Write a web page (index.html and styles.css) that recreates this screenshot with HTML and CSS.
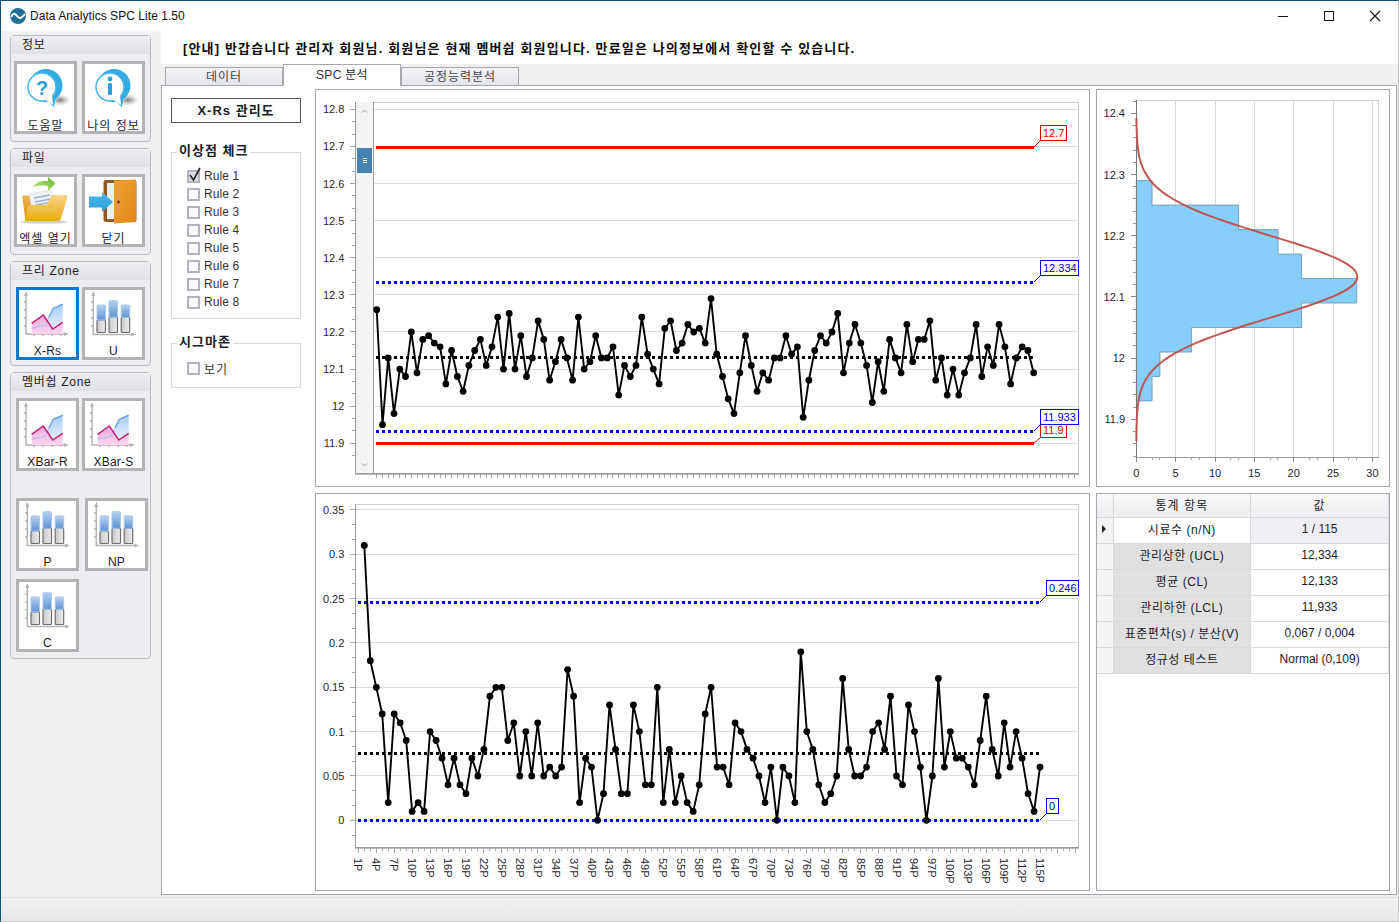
FILE: index.html
```html
<!DOCTYPE html>
<html lang="ko">
<head>
<meta charset="utf-8">
<title>Data Analytics SPC Lite 1.50</title>
<link rel="stylesheet" href="styles.css">
</head>
<body>
<svg class="defs" width="0" height="0" aria-hidden="true">
  <defs>
    <linearGradient id="gFolder" x1="0" y1="0" x2="0" y2="1"><stop offset="0" stop-color="#fbd58a"/><stop offset="1" stop-color="#e8ab12"/></linearGradient>
    <linearGradient id="gBack" x1="0" y1="0" x2="0" y2="1"><stop offset="0" stop-color="#f2b24a"/><stop offset="1" stop-color="#d98f1c"/></linearGradient>
    <linearGradient id="gArrow" x1="0" y1="1" x2="1" y2="0"><stop offset="0" stop-color="#d2ec96"/><stop offset="1" stop-color="#5cb424"/></linearGradient>
    <linearGradient id="gDoor" x1="0" y1="0" x2="1" y2="1"><stop offset="0" stop-color="#f0a32c"/><stop offset="1" stop-color="#e0861a"/></linearGradient>
    <linearGradient id="gBlueArrow" x1="0" y1="0" x2="0" y2="1"><stop offset="0" stop-color="#4cb8ea"/><stop offset="1" stop-color="#2f9fdc"/></linearGradient>
    <linearGradient id="gPink" x1="0" y1="0" x2="0" y2="1"><stop offset="0" stop-color="#f7a8dc"/><stop offset="1" stop-color="#fcd6ee"/></linearGradient>
    <linearGradient id="gSky" x1="0" y1="0" x2="0" y2="1"><stop offset="0" stop-color="#a9cdf7"/><stop offset="1" stop-color="#e6f0fc"/></linearGradient>
    <linearGradient id="gBarB" x1="0" y1="0" x2="0" y2="1"><stop offset="0" stop-color="#b5d2f2"/><stop offset="1" stop-color="#5f93d2"/></linearGradient>
    <linearGradient id="gBarG" x1="0" y1="0" x2="1" y2="0"><stop offset="0" stop-color="#c8c8c8"/><stop offset="1" stop-color="#ededed"/></linearGradient>
    <radialGradient id="gShade"><stop offset="0" stop-color="#777"/><stop offset="1" stop-color="#bbb" stop-opacity="0"/></radialGradient>
    <symbol id="i-bubble" viewBox="0 0 57 52">
      <ellipse cx="43" cy="36" rx="11" ry="6" fill="url(#gShade)"/>
      <circle cx="29" cy="21.5" r="16.5" fill="#33ace6"/>
      <path d="M27 34 L37 43 L39 30 Z" fill="#33ace6"/>
      <circle cx="25" cy="23" r="14" fill="#fff" stroke="#4ab6ea" stroke-width="1.5"/>
      <path d="M27 35 L36 41 L35 30 Z" fill="#fff"/>
    </symbol>
    <symbol id="i-chart" viewBox="0 0 57 52">
      <path d="M7 3V44H48" fill="none" stroke="#b4b4b4" stroke-width="1.5"/>
      <path d="M7 1L5 6H9ZM50 44L45 42V46Z" fill="#b4b4b4"/>
      <path d="M5 12H7M5 20H7M5 28H7M5 36H7M15 44V46M24 44V46M33 44V46M42 44V46" stroke="#999" stroke-width="1"/>
      <path d="M12.7 33.3L24.3 25L33.7 39L43.7 32.3V44H12.7Z" fill="url(#gPink)"/>
      <path d="M12.7 38.3L26 35L34.3 18.3L43.7 14.3V32.3L33.7 39L29 32Z" fill="url(#gSky)"/>
      <path d="M12.7 38.3L26 35L30 27" fill="none" stroke="#c4bdf4" stroke-width="1.5"/>
      <path d="M30 27L34.3 18.3L43.7 14.3" fill="none" stroke="#6ba3ee" stroke-width="1.5"/>
      <path d="M12.7 33.3L24.3 25L33.7 39L43.7 32.3" fill="none" stroke="#c41f72" stroke-width="1.5"/>
    </symbol>
    <symbol id="i-bars" viewBox="0 0 57 52">
      <path d="M8.3 3V44.5H49" fill="none" stroke="#b4b4b4" stroke-width="1.5"/>
      <path d="M8.3 1L6.3 6H10.3ZM51 44.5L46 42.5V46.5Z" fill="#b4b4b4"/>
      <path d="M6 12H8M6 20H8M6 28H8M6 36H8" stroke="#999"/>
      <rect x="12" y="30" width="8.5" height="12.5" rx="1" fill="url(#gBarG)" stroke="#6d6d6d" stroke-width="1.2"/>
      <rect x="12" y="15" width="8.5" height="15" rx="1" fill="url(#gBarB)" stroke="#a8c8f0" stroke-width="1"/>
      <rect x="24" y="27.3" width="8.5" height="15.2" rx="1" fill="url(#gBarG)" stroke="#6d6d6d" stroke-width="1.2"/>
      <rect x="24" y="10.7" width="8.5" height="16.6" rx="1" fill="url(#gBarB)" stroke="#a8c8f0" stroke-width="1"/>
      <rect x="36.2" y="27.3" width="8.5" height="15.2" rx="1" fill="url(#gBarG)" stroke="#6d6d6d" stroke-width="1.2"/>
      <rect x="36.2" y="15" width="8.5" height="12.3" rx="1" fill="url(#gBarB)" stroke="#a8c8f0" stroke-width="1"/>
    </symbol>
  </defs>
</svg>

<div class="window">
  <header class="titlebar">
    <svg class="appicon" width="18" height="18" viewBox="0 0 18 18"><circle cx="9" cy="9" r="8" fill="#1f6f96"/><path d="M2 10C4 6 6 6 8 9S12 12 16 7" fill="none" stroke="#fff" stroke-width="2"/></svg>
    <span class="apptitle">Data Analytics SPC Lite 1.50</span>
    <div class="winctrls">
      <span class="winbtn"><svg width="12" height="12" viewBox="0 0 12 12"><path d="M1 6.5H11" stroke="#111"/></svg></span>
      <span class="winbtn"><svg width="12" height="12" viewBox="0 0 12 12"><rect x="1.5" y="1.5" width="9" height="9" fill="none" stroke="#111"/></svg></span>
      <span class="winbtn"><svg width="12" height="12" viewBox="0 0 12 12"><path d="M1 1L11 11M11 1L1 11" stroke="#111" stroke-width="1.1"/></svg></span>
    </div>
  </header>

  <div class="appbody">
    <aside class="sidebar">
      <section class="group">
        <h2 class="group-head">정보</h2>
        <div class="group-body tight">
          <button class="tool"><svg class="tool-icon"><use href="#i-bubble"/><text class="bubble-mark" x="25" y="31">?</text></svg><span class="ko">도움말</span></button>
          <button class="tool"><svg class="tool-icon"><use href="#i-bubble"/><circle cx="25" cy="15" r="2.4" fill="#2f9fdc"/><rect x="23" y="19" width="4" height="12" rx="1" fill="#2f9fdc"/></svg><span class="ko">나의 정보</span></button>
        </div>
      </section>
      <section class="group">
        <h2 class="group-head">파일</h2>
        <div class="group-body tight">
          <button class="tool"><svg class="tool-icon" viewBox="0 0 57 52">
            <ellipse cx="27" cy="45" rx="24" ry="1.6" fill="#d0d0d0"/>
            <path d="M5.3 19.7Q5 18.5 7 18.5H12L14 20V40L8.5 44Z" fill="url(#gBack)"/>
            <path d="M12 17L34 13L38 30L15 34Z" fill="#eef2f6" stroke="#cfd6dc" stroke-width=".6"/>
            <path d="M17 21L33 18M18 25L34 22M19 28L35 25" stroke="#9cb4cc" stroke-width="1.6"/>
            <path d="M11.3 28H29.7L34.7 18H49Q51 18 50.5 20L43.5 43Q43 44 42 44H8Z" fill="url(#gFolder)"/>
            <path d="M15.7 11C18 5 24 3.4 31 4V0L38.5 6.5L31 14V9C25 8 20 8.500 15.7 11Z" fill="url(#gArrow)"/>
          </svg><span class="ko">엑셀 열기</span></button>
          <button class="tool"><svg class="tool-icon" viewBox="0 0 57 52">
            <rect x="18.5" y="3" width="33" height="42" rx="2.5" fill="#8f5a22"/>
            <rect x="22" y="6" width="8" height="36" fill="#eeeeee"/>
            <path d="M29 3.5L51 2.500V45L29 46.5Z" fill="url(#gDoor)"/>
            <circle cx="33.5" cy="25" r="1.4" fill="#6a3c10"/>
            <path d="M4 19.5H17V15L28 25L17 35V30.5H4Z" fill="url(#gBlueArrow)"/>
          </svg><span class="ko">닫기</span></button>
        </div>
      </section>
      <section class="group">
        <h2 class="group-head">프리 Zone</h2>
        <div class="group-body wide short">
          <button class="tool selected"><svg class="tool-icon"><use href="#i-chart"/></svg><span>X-Rs</span></button>
          <button class="tool"><svg class="tool-icon"><use href="#i-bars"/></svg><span>U</span></button>
        </div>
      </section>
      <section class="group">
        <h2 class="group-head">멤버쉽 Zone</h2>
        <div class="group-body member">
          <div class="toolrow row-xbar">
            <button class="tool"><svg class="tool-icon"><use href="#i-chart"/></svg><span>XBar-R</span></button>
            <button class="tool"><svg class="tool-icon"><use href="#i-chart"/></svg><span>XBar-S</span></button>
          </div>
          <div class="toolrow row-p">
            <button class="tool"><svg class="tool-icon"><use href="#i-bars"/></svg><span>P</span></button>
            <button class="tool"><svg class="tool-icon"><use href="#i-bars"/></svg><span>NP</span></button>
          </div>
          <div class="toolrow row-c">
            <button class="tool"><svg class="tool-icon"><use href="#i-bars"/></svg><span>C</span></button>
          </div>
        </div>
      </section>
    </aside>

    <main class="content">
      <p class="notice">[안내] 반갑습니다 관리자 회원님. 회원님은 현재 멤버쉽 회원입니다. 만료일은 나의정보에서 확인할 수 있습니다.</p>
      <nav class="tabs">
        <span class="tab ko">데이터</span>
        <span class="tab active">SPC 분석</span>
        <span class="tab ko">공정능력분석</span>
      </nav>
      <div class="tabpanel">
        <div class="options">
          <div class="chart-title">X-Rs 관리도</div>
          <fieldset class="opts rules">
            <legend>이상점 체크</legend>
            <label class="rule"><span class="check on"><svg class="tick" width="16" height="16" viewBox="0 0 16 16"><path d="M3 8L6.5 13L13 1" fill="none" stroke="#222" stroke-width="1.6"/></svg></span>Rule 1</label>
            <label class="rule"><span class="check"></span>Rule 2</label>
            <label class="rule"><span class="check"></span>Rule 3</label>
            <label class="rule"><span class="check"></span>Rule 4</label>
            <label class="rule"><span class="check"></span>Rule 5</label>
            <label class="rule"><span class="check"></span>Rule 6</label>
            <label class="rule"><span class="check"></span>Rule 7</label>
            <label class="rule"><span class="check"></span>Rule 8</label>
          </fieldset>
          <fieldset class="opts sigma">
            <legend>시그마존</legend>
            <label class="rule"><span class="check"></span><span class="ko">보기</span></label>
          </fieldset>
        </div>
        <div class="panel"><svg id="chartX" class="chart" viewBox="316 90 773 396"></svg></div>
        <div class="panel side"><svg id="chartH" class="chart" viewBox="1097 90 292 396"></svg></div>
        <div class="panel"><svg id="chartR" class="chart" viewBox="316 494 773 396"></svg></div>
        <div class="panel side">
          <table class="stats">
            <thead>
              <tr><th class="rowhead"></th><th>통계 항목</th><th>값</th></tr>
            </thead>
            <tbody>
              <tr class="current"><td class="rowhead"><i class="pointer"></i></td><td class="name">시료수 (n/N)</td><td class="val">1 / 115</td></tr>
              <tr><td class="rowhead"></td><td class="name">관리상한 (UCL)</td><td class="val">12,334</td></tr>
              <tr><td class="rowhead"></td><td class="name">평균 (CL)</td><td class="val">12,133</td></tr>
              <tr><td class="rowhead"></td><td class="name">관리하한 (LCL)</td><td class="val">11,933</td></tr>
              <tr><td class="rowhead"></td><td class="name">표준편차(s) / 분산(V)</td><td class="val">0,067 / 0,004</td></tr>
              <tr><td class="rowhead"></td><td class="name">정규성 테스트</td><td class="val">Normal (0,109)</td></tr>
            </tbody>
          </table>
        </div>
      </div>
    </main>
  </div>
  <footer class="statusbar"></footer>
</div>
<script src="charts.js"></script>
</body>
</html>
```

FILE: styles.css
```css
* { box-sizing: border-box; }
html, body { margin: 0; height: 100%; overflow: hidden; background: #f0f0f0; }
body { font-family: "Liberation Sans", "Noto Sans CJK KR", sans-serif; font-size: 12px; color: #1b1b26; }
.defs { position: absolute; }

.window { width: 1399px; height: 922px; display: flex; flex-direction: column; border: 1px solid #0f5472; border-bottom-color: #c8c8c8; border-right-color: #c8c8c8; background: #f0f0f0; }

.titlebar { height: 30px; flex: none; display: flex; align-items: center; background: #fff; padding-left: 8px; }
.appicon { flex: none; }
.apptitle { margin-left: 3px; font-size: 12px; letter-spacing: .05px; color: #111; }
.winctrls { margin-left: auto; display: flex; }
.winbtn { width: 46px; height: 30px; display: flex; align-items: center; justify-content: center; }

.appbody { flex: 1; display: flex; min-height: 0; }

.sidebar { width: 160px; flex: none; padding: 4px 0 0 9px; display: flex; flex-direction: column; gap: 6px; background: #f0f0f0; }
.group { width: 141px; border: 1px solid #b9bcc2; border-radius: 4px; background: #ecedf0; }
.group-head { margin: 0; height: 18px; padding-left: 11px; font-size: 12px; font-weight: normal; line-height: 19px; letter-spacing: .7px; background: linear-gradient(#eceef1, #dfe1e5); }
.group-body { display: flex; padding: 7px 0 7px 3px; gap: 5px; }
.group-body.wide { padding-left: 5px; gap: 3px; }
.group-body.short { padding-bottom: 5px; }
.group-body.member { display: block; padding: 7px 0 6px 5px; }
.toolrow { display: flex; gap: 3px; }
.toolrow.row-p { margin-top: 27px; gap: 6px; }
.toolrow.row-c { margin-top: 8px; }

.tool { width: 63px; height: 73px; padding: 0; border: 3px solid #b3b3b3; background: #fff; display: flex; flex-direction: column; align-items: center; font: inherit; color: inherit; }
.tool.selected { border-color: #0a78d2; }
.tool span { display: block; height: 16px; margin-top: 2px; line-height: 15px; white-space: nowrap; letter-spacing: .2px; }
.tool span.ko { margin-top: 3px; letter-spacing: 1px; }
.tool-icon { width: 57px; height: 52px; flex: none; display: block; }
.bubble-mark { font: bold 20px "Liberation Sans", sans-serif; fill: #2f9fdc; text-anchor: middle; }

.content { flex: 1; min-width: 0; display: flex; flex-direction: column; padding-right: 1px; }
.notice { margin: 0 -1px 0 0; height: 33px; padding-left: 22px; background: #fff; font-weight: bold; font-size: 13px; line-height: 36px; letter-spacing: 1.15px; color: #0a0a0a; white-space: nowrap; overflow: hidden; }
.tabs { height: 22px; flex: none; display: flex; align-items: flex-end; padding-left: 4px; margin-bottom: -1px; }
.tab { width: 118px; height: 19px; padding-bottom: 2px; display: flex; align-items: center; justify-content: center; border: 1px solid #a7a7ad; background: linear-gradient(#f3f4f6, #e4e5e9); color: #44444e; }
.tab.ko { letter-spacing: 1px; }
.tab.active { height: 22px; padding-bottom: 4px; background: #fff; border-bottom-color: #fff; position: relative; z-index: 1; color: #30303a; letter-spacing: .3px; }

.tabpanel { height: 810px; border: 1px solid #a5a5ad; background: #fff; display: grid; grid-template-columns: 153px 775px 300px; grid-template-rows: 398px 398px; row-gap: 6px; padding-top: 3px; align-content: start; }
.options { grid-row: 1 / span 2; padding: 9px 0 0 9px; }
.panel { border: 1px solid #a5a5ad; background: #fff; overflow: hidden; }
.panel.side { margin-left: 6px; }
.chart { display: block; width: 100%; height: 100%; }

.chart-title { width: 130px; height: 25px; border: 1px solid #555; font-weight: bold; font-size: 13px; text-align: center; line-height: 23px; letter-spacing: 1px; }
.opts { width: 130px; margin: 0; padding: 0; border: 1px solid #d8d8dc; }
.opts legend { margin-left: -10px; padding: 0 2px; height: 16px; line-height: 14px; font-weight: bold; font-size: 13px; letter-spacing: 1px; }
.rules { margin-top: 21px; padding: 7px 0 7px 15px; }
.sigma { margin-top: 16px; padding: 8px 0 10px 15px; }
.rule { display: flex; align-items: center; height: 18px; gap: 4px; letter-spacing: .1px; color: #33333d; }
.rule .ko { letter-spacing: 1px; }
.check { position: relative; width: 13px; height: 13px; flex: none; border: 2px solid #b1b3c0; background: #fafafa; }
.check.on { background: #dcdce4; }
.tick { position: absolute; left: -2px; top: -5px; overflow: visible; }

.stats { width: 292px; border-collapse: collapse; table-layout: fixed; text-align: center; }
.stats th, .stats td { border: 1px solid #d9d9dc; padding: 0 0 2px; height: 26px; font-weight: normal; overflow: hidden; white-space: nowrap; }
.stats tr > :first-child { border-left: 0; }
.stats tr > :last-child { border-right: 1px solid #d9d9dc; }
.stats thead th { height: 23px; border-top: 0; background: linear-gradient(#f8f8f9, #eceef0); letter-spacing: 1.1px; }
.stats .rowhead { width: 16px; background: #f4f4f5; }
.stats thead .rowhead { background: linear-gradient(#f8f8f9, #eceef0); }
.stats .name { background: #e0e0e0; letter-spacing: .55px; padding-bottom: 3px; }
.stats .val { background: #fff; }
.stats .current .name { background: #fff; }
.stats .current .val { background: #eeeff2; }
.pointer { display: block; width: 0; height: 0; margin-left: 5px; border-left: 4px solid #222; border-top: 4px solid transparent; border-bottom: 4px solid transparent; }

.statusbar { height: 24px; flex: none; background: linear-gradient(#f0f0f0, #e8e8e8); border-top: 1px solid #e0e0e0; }

.axis-label { font: 11px "Liberation Sans", sans-serif; fill: #1f1f2e; }
.tag-label { font: 11px "Liberation Sans", sans-serif; }
```

FILE: charts.js
```javascript
(function () {
  var X = [12.26,11.95,12.13,11.98,12.10,12.08,12.20,12.09,12.18,12.19,12.17,12.16,12.06,12.15,12.08,12.04,12.11,12.15,12.18,12.11,
    12.16,12.24,12.10,12.25,12.10,12.19,12.08,12.13,12.23,12.18,12.07,12.12,12.18,12.13,12.07,12.24,12.10,12.12,12.19,12.13,
    12.13,12.16,12.03,12.11,12.08,12.11,12.24,12.14,12.10,12.06,12.21,12.23,12.15,12.17,12.22,12.20,12.21,12.17,12.29,12.14,
    12.08,12.02,11.98,12.09,12.19,12.11,12.04,12.09,12.07,12.13,12.13,12.19,12.14,12.16,11.97,12.07,12.15,12.19,12.17,12.20,
    12.25,12.09,12.17,12.22,12.17,12.11,12.01,12.12,12.04,12.18,12.13,12.09,12.22,12.12,12.18,12.18,12.23,12.07,12.13,12.03,
    12.10,12.03,12.09,12.13,12.22,12.08,12.16,12.11,12.22,12.16,12.06,12.13,12.16,12.15,12.09];
  var R = [.31,.18,.15,.12,.02,.12,.11,.09,.01,.02,.01,.10,.09,.07,.04,.07,.04,.03,.07,.05,
    .08,.14,.15,.15,.09,.11,.05,.10,.05,.11,.05,.06,.05,.06,.17,.14,.02,.07,.06,0,
    .03,.13,.08,.03,.03,.13,.10,.04,.04,.15,.02,.08,.02,.05,.02,.01,.04,.12,.15,.06,
    .06,.04,.11,.10,.08,.07,.05,.02,.06,0,.06,.05,.02,.19,.10,.08,.04,.02,.03,.05,
    .16,.08,.05,.05,.06,.10,.11,.08,.14,.05,.04,.13,.10,.06,0,.05,.16,.06,.10,.07,
    .07,.06,.04,.09,.14,.08,.05,.11,.06,.10,.07,.03,.01,.06];

  var GRID = '#dddddd', FRAME = '#cfcfcf', AXIS = '#9a9a9a', TICK = '#a8a8a8';
  function px(v) { return Math.floor(v) + 0.5; }
  function hline(x1, x2, y, c) { return '<path shape-rendering="crispEdges" d="M' + x1 + ' ' + px(y) + 'H' + x2 + '" stroke="' + c + '"/>'; }
  function vline(x, y1, y2, c) { return '<path shape-rendering="crispEdges" d="M' + px(x) + ' ' + y1 + 'V' + y2 + '" stroke="' + c + '"/>'; }
  function dash(x1, x2, y, c) { return '<path shape-rendering="crispEdges" d="M' + x1 + ' ' + y + 'H' + x2 + '" stroke="' + c + '" stroke-width="3" stroke-dasharray="3 3"/>'; }
  function solid(x1, x2, y, c) { return '<path shape-rendering="crispEdges" d="M' + x1 + ' ' + y + 'H' + x2 + '" stroke="' + c + '" stroke-width="3"/>'; }
  function label(x, y, t, anchor) { return '<text class="axis-label" x="' + x + '" y="' + y + '" text-anchor="' + (anchor || 'end') + '">' + t + '</text>'; }

  function tag(xEnd, y, x, top, w, t, color) {
    return '<path d="M' + xEnd + ' ' + y + 'L' + (x + 0.5) + ' ' + (top + 15.5) + '" stroke="' + color + '"/>' +
      '<rect x="' + (x + 0.5) + '" y="' + (top + 0.5) + '" width="' + w + '" height="15" fill="#fff" stroke="' + color + '" shape-rendering="crispEdges"/>' +
      '<text class="tag-label" x="' + (x + 3) + '" y="' + (top + 12) + '" fill="' + color + '">' + t + '</text>';
  }
  function series(pts) {
    var s = '<polyline fill="none" stroke="#000" stroke-width="1.9" stroke-linejoin="round" points="' +
      pts.map(function (p) { return p[0].toFixed(1) + ',' + p[1].toFixed(1); }).join(' ') + '"/>';
    pts.forEach(function (p) { s += '<circle cx="' + p[0].toFixed(1) + '" cy="' + p[1].toFixed(1) + '" r="3.4" fill="#000"/>'; });
    return s;
  }

  /* X chart */
  (function () {
    var y = function (v) { return 443.3 - (v - 11.9) * 371.1; };
    var x = function (i) { return 376.7 + i * 5.763; };
    var s = '', L = 373, Rt = 1078, T = 102, B = 473, v, i;
    s += hline(L, Rt + 1, T, FRAME) + vline(Rt, T, B, FRAME);
    for (i = 0; i < 10; i++) {
      v = 11.9 + i * 0.1;
      s += hline(L, Rt, y(v), GRID);
      s += hline(350, 355, y(v), TICK);
      s += label(344.3, y(v) + 4, i === 1 ? '12' : v.toFixed(1));
    }
    for (i = -1; i < 29; i++) {
      if ((i + 3) % 3 !== 0 || i < 0) {
        var yy = 443.3 - i * 37.11 / 3;
        if (yy > 103 && yy < 473) s += hline(352, 355, yy, TICK);
      }
    }
    s += '<rect x="355" y="' + T + '" width="18" height="' + (B - T) + '" fill="#f4f4f4"/>';
    s += vline(355, T, B + 1, AXIS) + vline(373, T, B + 1, AXIS);
    s += hline(355, Rt + 1, B, AXIS) + hline(355, Rt + 1, B + 1, '#bdbdbd');
    s += '<rect x="357" y="148" width="15" height="25" fill="#4682b4"/>';
    s += '<path shape-rendering="crispEdges" d="M362.5 158.5h4M362.5 160.5h4M362.5 162.5h4" stroke="#fff"/>';
    s += '<path d="M362 112.5l2.5-2.5l2.5 2.5M362 463.5l2.5 2.5l2.5-2.5" fill="none" stroke="#9a9a9a"/>';
    for (i = 0; i < 122; i++) { var tx = x(i); if (tx < Rt) s += vline(tx, B + 1, B + 5, TICK); }
    s += solid(376, 1034, 147.3, '#ff0000') + solid(376, 1034, 443.3, '#ff0000');
    s += dash(376, 1034, 282.3, '#0000ff') + dash(376, 1034, 431, '#0000ff');
    s += dash(376, 1034, 357.3, '#000');
    s += series(X.map(function (v, i) { return [x(i), y(v)]; }));
    s += tag(1034, 147, 1040, 125, 26, '12.7', '#e00000');
    s += tag(1034, 282, 1040, 260, 38, '12.334', '#0000e0');
    s += tag(1034, 443, 1040, 422, 26, '11.9', '#e00000');
    s += tag(1034, 431, 1040, 409, 38, '11.933', '#0000e0');
    document.getElementById('chartX').innerHTML = s;
  })();

  /* Range chart */
  (function () {
    var y = function (v) { return 820.3 - v * 886.6; };
    var x = function (i) { return 364.3 + i * 5.98; };
    var s = '', L = 355, Rt = 1078, T = 504, B = 847, i, v;
    s += hline(L, Rt + 1, T, FRAME) + vline(Rt, T, B, FRAME);
    for (i = 0; i < 8; i++) {
      v = i * 0.05;
      s += hline(L, Rt, y(v), GRID);
      s += hline(350, 355, y(v), TICK);
      s += label(344.3, y(v) + 4, i === 0 ? '0' : String(+v.toFixed(2)));
    }
    for (i = -1; i < 23; i++) {
      if (i < 0 || i % 3 !== 0) { var yy = 820.3 - i * 44.33 / 3; if (yy > 505 && yy < 847) s += hline(352, 355, yy, TICK); }
    }
    s += vline(L, T, B + 1, AXIS);
    s += hline(L, Rt + 1, B, AXIS) + hline(L, Rt + 1, B + 1, '#bdbdbd');
    for (i = 0; i < 121; i++) {
      var tx = 358.3 + i * 5.98;
      if (tx < Rt) s += vline(tx, B + 1, B + (i % 3 === 0 ? 6 : 4), TICK);
      if (i % 3 === 0 && i <= 114) {
        s += '<text class="axis-label" transform="translate(' + (tx - 4) + ',858) rotate(90)">' + (i + 1) + 'P</text>';
      }
    }
    s += dash(358, 1040, 602.3, '#0000ff') + dash(358, 1040, 820.3, '#0000ff');
    s += dash(358, 1040, 753.3, '#000');
    s += series(R.map(function (v, i) { return [x(i), y(v)]; }));
    s += tag(1040, 602, 1046, 580, 32, '0.246', '#0000e0');
    s += tag(1040, 820, 1046, 798, 12, '0', '#0000e0');
    document.getElementById('chartR').innerHTML = s;
  })();

  /* Histogram */
  (function () {
    var y = function (v) { return 419.3 - (v - 11.9) * 612; };
    var x = function (c) { return 1136.3 + c * 7.87; };
    var L = 1136, Rt = 1378, T = 100, B = 457, s = '', i, v;
    s += hline(L, Rt + 1, T, FRAME) + vline(Rt, T, B, FRAME);
    for (i = 1; i <= 6; i++) s += vline(x(i * 5), T, B, '#d6d6d6');
    var steps = [[12.29, 12.25, 2], [12.25, 12.21, 13], [12.21, 12.17, 18], [12.17, 12.13, 21], [12.13, 12.09, 28], [12.09, 12.05, 21], [12.05, 12.01, 7], [12.01, 11.97, 3], [11.97, 11.93, 2]];
    var d = 'M' + x(0) + ' ' + y(12.29);
    steps.forEach(function (b) { d += 'H' + x(b[2]).toFixed(1) + 'V' + y(b[1]).toFixed(1); });
    d += 'H' + x(0) + 'Z';
    s += '<path d="' + d + '" fill="#87cefa" stroke="#72a3c4" stroke-width="1"/>';
    s += vline(L, T, B + 1, '#777') + hline(L, Rt + 1, B, AXIS);
    for (i = 0; i < 6; i++) {
      v = 11.9 + i * 0.1;
      s += hline(1131, L, y(v), '#888');
      s += label(1125, y(v) + 4, i === 1 ? '12' : v.toFixed(1));
    }
    for (i = -3; i < 28; i++) {
      if (i % 5 !== 0) { var yy = 419.3 - i * 61.2 / 5; if (yy > T && yy <= B) s += hline(1133, L, yy, '#999'); }
    }
    for (i = 0; i <= 6; i++) {
      s += vline(x(i * 5), B, B + 5, '#888');
      s += label(x(i * 5), 477, String(i * 5), 'middle');
    }
    for (i = 0; i < 30; i++) {
      var m5 = i % 5;
      if (m5 === 2 || m5 === 3) s += vline(x(i), B, B + 3, '#aaa');
    }
    var c = [], m = 12.133, sd = 0.067;
    for (v = 11.864; v <= 12.392; v += 0.004) c.push(x(28.08 * Math.exp(-0.5 * Math.pow((v - m) / sd, 2))).toFixed(1) + ',' + y(v).toFixed(1));
    s += '<polyline fill="none" stroke="#bf4f4c" stroke-width="2" stroke-opacity=".95" points="' + c.join(' ') + '"/>';
    document.getElementById('chartH').innerHTML = s;
  })();
})();
```
